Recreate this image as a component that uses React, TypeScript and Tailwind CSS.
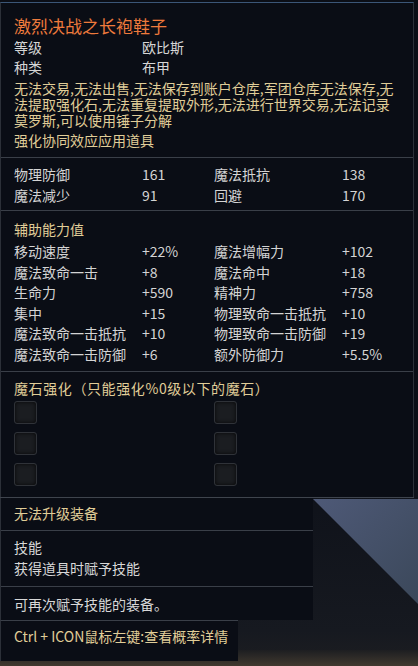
import React from 'react';

const stats: [string, string, string, string][] = [
  ['物理防御', '161', '魔法抵抗', '138'],
  ['魔法减少', '91', '回避', '170'],
];

const subStats: [string, string, string, string][] = [
  ['移动速度', '+22%', '魔法增幅力', '+102'],
  ['魔法致命一击', '+8', '魔法命中', '+18'],
  ['生命力', '+590', '精神力', '+758'],
  ['集中', '+15', '物理致命一击抵抗', '+10'],
  ['魔法致命一击抵抗', '+10', '物理致命一击防御', '+19'],
  ['魔法致命一击防御', '+6', '额外防御力', '+5.5%'],
];

const StatGrid: React.FC<{ rows: [string, string, string, string][]; leading: string }> = ({ rows, leading }) => (
  <div className={`grid grid-cols-[128px_72px_128px_1fr] text-[#d4d4d4] ${leading}`}>
    {rows.map((r) => (
      <React.Fragment key={r[0] + r[2]}>
        <span className="whitespace-nowrap">{r[0]}</span>
        <span>{r[1]}</span>
        <span className="whitespace-nowrap">{r[2]}</span>
        <span>{r[3]}</span>
      </React.Fragment>
    ))}
  </div>
);

const Slot: React.FC = () => (
  <div className="w-[23px] h-[23px] rounded-[3px] bg-[#1b1d21] border border-[#2f3238] shadow-[inset_0_0_4px_rgba(0,0,0,0.8)]" />
);

const Scene: React.FC = () => (
  <svg className="absolute inset-0" width="418" height="666" viewBox="0 0 418 666">
    <defs>
      <linearGradient id="tri" x1="0" y1="0" x2="1" y2="1">
        <stop offset="0" stopColor="#4e5977" />
        <stop offset="1" stopColor="#3b485a" />
      </linearGradient>
      <linearGradient id="dark" x1="0" y1="0" x2="0" y2="1">
        <stop offset="0" stopColor="#0f121a" />
        <stop offset="0.8" stopColor="#161920" />
        <stop offset="1" stopColor="#1d1e21" />
      </linearGradient>
      <linearGradient id="floor" x1="0" y1="0" x2="0" y2="1">
        <stop offset="0" stopColor="#1d1e21" />
        <stop offset="1" stopColor="#41392f" />
      </linearGradient>
    </defs>
    <rect x="0" y="490" width="418" height="176" fill="url(#dark)" />
    <polygon points="313,499 418,499 418,604" fill="url(#tri)" />
    <rect x="0" y="650" width="418" height="16" fill="url(#floor)" />
  </svg>
);

const App: React.FC = () => {
  return (
    <div className="relative w-[418px] h-[666px] overflow-hidden bg-[#0b0e16] font-['Noto_Sans_CJK_SC','Noto_Sans',sans-serif] text-[14px]">
      <Scene />
      <div className="relative flex flex-col">
        <div className="w-[414px] mt-[2px] border-t border-x border-t-[#3b5677] border-x-[#2c3038] bg-[#0a0d15]">
          <div className="px-[13px] pt-[12px] pb-[7px]">
            <h1 className="text-[17px] leading-[22px] text-[#ee7a3c]">激烈决战之长袍鞋子</h1>
            <div className="grid grid-cols-[128px_1fr] leading-[20px] text-[#d6d6d6]">
              <span>等级</span>
              <span>欧比斯</span>
              <span>种类</span>
              <span>布甲</span>
            </div>
            <div className="mt-[3px] leading-[16px] text-[#e0cd98]">
              <p className="whitespace-nowrap">无法交易,无法出售,无法保存到账户仓库,军团仓库无法保存,无</p>
              <p className="whitespace-nowrap">法提取强化石,无法重复提取外形,无法进行世界交易,无法记录</p>
              <p className="whitespace-nowrap">莫罗斯,可以使用锤子分解</p>
            </div>
            <p className="mt-[2px] leading-[20px] text-[#e0cd98]">强化协同效应应用道具</p>
          </div>
          <div className="border-t border-[#3a3f48] px-[13px] pt-[6px] pb-[4px]">
            <StatGrid rows={stats} leading="leading-[21px]" />
          </div>
          <div className="border-t border-[#3a3f48] px-[13px] pt-[8px] pb-[6px]">
            <p className="leading-[20px] text-[#e0cd98]">辅助能力值</p>
            <div className="mt-[2px]">
              <StatGrid rows={subStats} leading="leading-[20.6px]" />
            </div>
          </div>
          <div className="border-t border-[#3a3f48] px-[13px] pt-[6px] pb-[11px]">
            <p className="leading-[20px] text-[#e0cd98] whitespace-nowrap tracking-[0.6px]">魔石强化（只能强化%0级以下的魔石）</p>
            <div className="mt-[3px] grid grid-cols-[200px_1fr] gap-y-[8px]">
              <Slot />
              <Slot />
              <Slot />
              <Slot />
              <Slot />
              <Slot />
            </div>
          </div>
        </div>
        <div className="w-[414px] h-px bg-[#3f444d]" />
        <div className="w-[313px] bg-[#0a0d15] border-l border-[#2c3038]">
          <div className="px-[13px] pt-[5px] pb-[7px]">
            <p className="leading-[20px] text-[#e0cd98]">无法升级装备</p>
          </div>
          <div className="border-t border-[#3a3f48] px-[13px] pt-[6px] pb-[7px] text-[#d8d8d8] leading-[21px]">
            <p>技能</p>
            <p>获得道具时赋予技能</p>
          </div>
          <div className="border-t border-[#3a3f48] px-[13px] pt-[7px] pb-[6px]">
            <p className="leading-[20px] text-[#d8d8d8]">可再次赋予技能的装备。</p>
          </div>
        </div>
        <div className="w-[238px] bg-[#0a0d15] border-l border-t border-l-[#2c3038] border-t-[#3a3f48] px-[13px] pt-[5px] pb-[15px]">
          <p className="leading-[20px] text-[#e0cd98] whitespace-nowrap">Ctrl + ICON鼠标左键:查看概率详情</p>
        </div>
      </div>
    </div>
  );
};

export default App;
